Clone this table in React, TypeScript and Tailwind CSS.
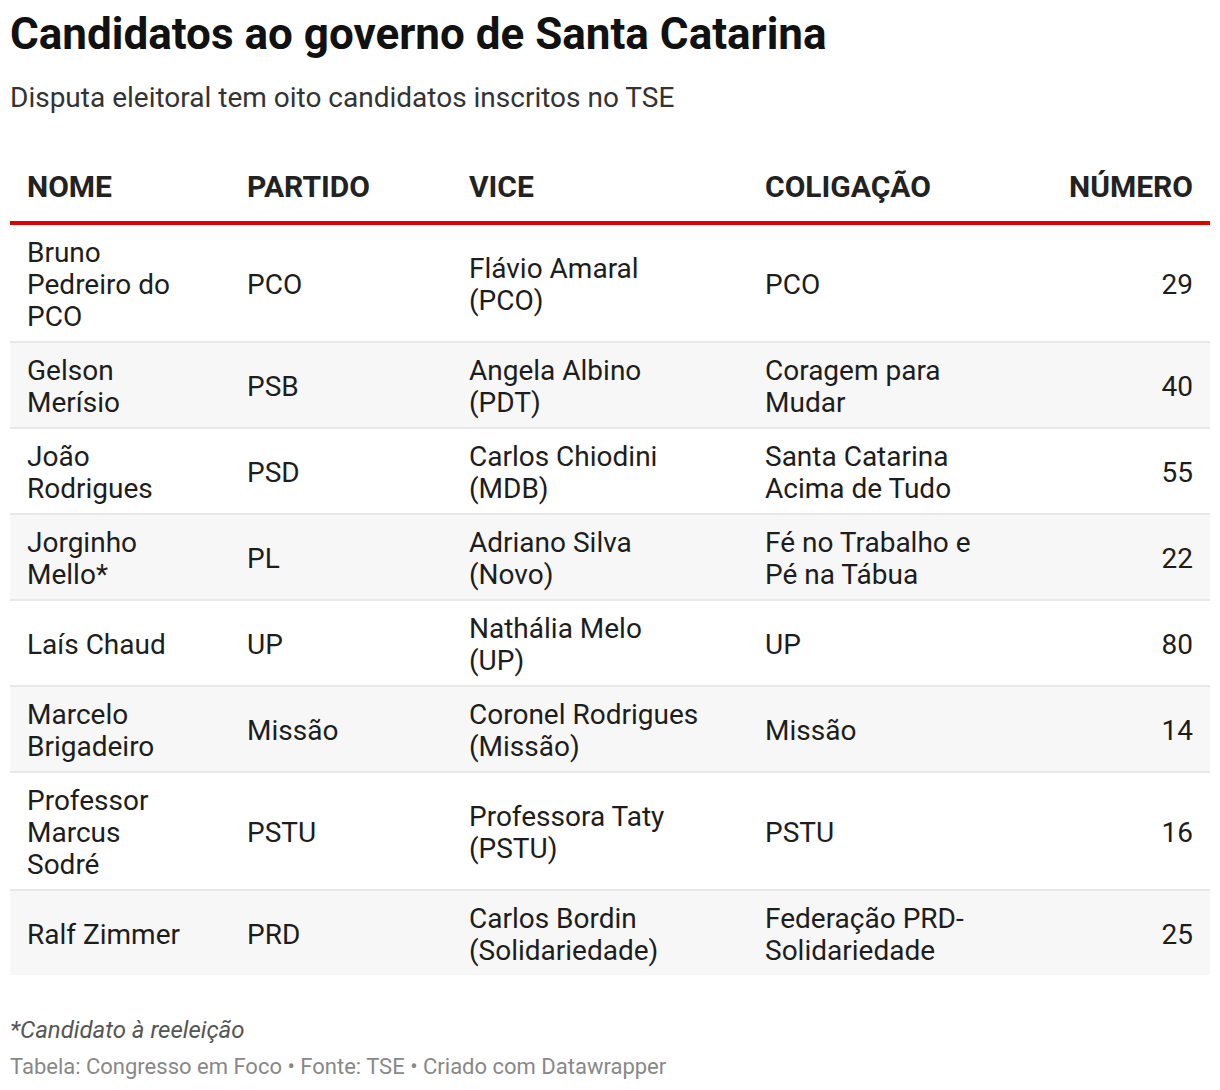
const rows = [
  { nome: "Bruno Pedreiro do PCO", partido: "PCO", vice: "Flávio Amaral (PCO)", coligacao: "PCO", numero: "29" },
  { nome: "Gelson Merísio", partido: "PSB", vice: "Angela Albino (PDT)", coligacao: "Coragem para Mudar", numero: "40" },
  { nome: "João Rodrigues", partido: "PSD", vice: "Carlos Chiodini (MDB)", coligacao: "Santa Catarina Acima de Tudo", numero: "55" },
  { nome: "Jorginho Mello*", partido: "PL", vice: "Adriano Silva (Novo)", coligacao: "Fé no Trabalho e Pé na Tábua", numero: "22" },
  { nome: "Laís Chaud", partido: "UP", vice: "Nathália Melo (UP)", coligacao: "UP", numero: "80" },
  { nome: "Marcelo Brigadeiro", partido: "Missão", vice: "Coronel Rodrigues (Missão)", coligacao: "Missão", numero: "14" },
  { nome: "Professor Marcus Sodré", partido: "PSTU", vice: "Professora Taty (PSTU)", coligacao: "PSTU", numero: "16" },
  { nome: "Ralf Zimmer", partido: "PRD", vice: "Carlos Bordin (Solidariedade)", coligacao: "Federação PRD-Solidariedade", numero: "25" },
];

const th = "pb-[18px] text-[30px] font-bold leading-[32px] text-[#222222]";
const td = "pt-[12px] pb-[8px] align-middle text-[28px] leading-[32px]";

export default function App() {
  return (
    <div className="w-[1220px] bg-white px-[10px] pt-[10px] font-['Roboto',sans-serif] text-[#1d1d1d]">
      <h1 className="text-[44px] font-bold leading-[48px] text-[#111111]">
        Candidatos ao governo de Santa Catarina
      </h1>
      <p className="mt-[24px] text-[28px] leading-[32px] text-[#333333]">
        Disputa eleitoral tem oito candidatos inscritos no TSE
      </p>

      <table className="mt-[57px] w-[1200px] table-fixed border-collapse">
        <colgroup>
          <col className="w-[220px]" />
          <col className="w-[222px]" />
          <col className="w-[296px]" />
          <col className="w-[252px]" />
          <col className="w-[210px]" />
        </colgroup>
        <thead>
          <tr className="border-b-[4px] border-[#e00000]">
            <th className={`${th} pl-[17px] pr-[8px] text-left`}>NOME</th>
            <th className={`${th} pl-[17px] pr-[8px] text-left`}>PARTIDO</th>
            <th className={`${th} pl-[17px] pr-[8px] text-left`}>VICE</th>
            <th className={`${th} pl-[17px] pr-[8px] text-left`}>COLIGAÇÃO</th>
            <th className={`${th} pl-[8px] pr-[17px] text-right`}>NÚMERO</th>
          </tr>
        </thead>
        <tbody>
          {rows.map((r, i) => (
            <tr
              key={r.nome}
              className={`${i % 2 === 1 ? "bg-[#f7f7f7]" : "bg-white"} ${i < rows.length - 1 ? "border-b-2 border-[#e8e8e8]" : ""}`}
            >
              <td className={`${td} pl-[17px] pr-[38px]`}>{r.nome}</td>
              <td className={`${td} pl-[17px] pr-[8px]`}>{r.partido}</td>
              <td className={`${td} pl-[17px] pr-[49px]`}>{r.vice}</td>
              <td className={`${td} pl-[17px] pr-[15px]`}>{r.coligacao}</td>
              <td className={`${td} pl-[8px] pr-[17px] text-right`}>{r.numero}</td>
            </tr>
          ))}
        </tbody>
      </table>

      <p className="mt-[41px] text-[24px] italic leading-[28px] text-[#555555]">*Candidato à reeleição</p>
      <p className="mt-[9px] pb-[10px] text-[22px] leading-[28px] text-[#888888]">
        Tabela: Congresso em Foco • Fonte: TSE • Criado com Datawrapper
      </p>
    </div>
  );
}
